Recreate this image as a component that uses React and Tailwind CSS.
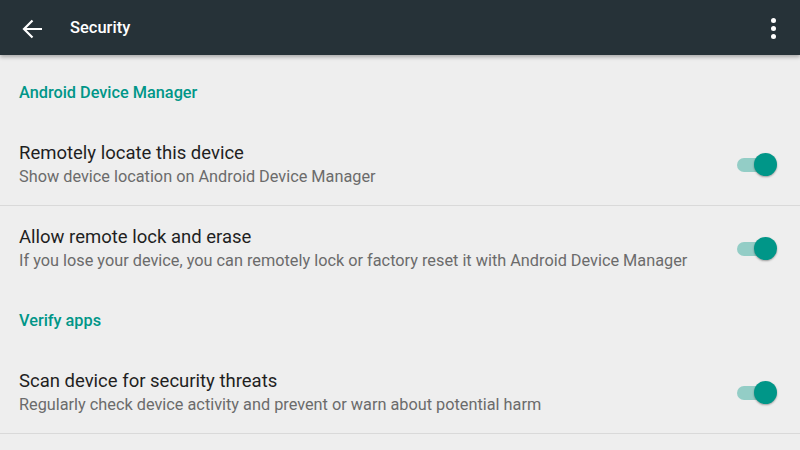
import React from "react";

function Toggle() {
  return (
    <div className="relative w-[40px] h-[24px] mr-[23px] flex items-center">
      <div className="absolute left-0 right-[4px] h-[14px] rounded-full bg-[#93cdc6]" />
      <div className="absolute right-0 w-[23px] h-[23px] rounded-full bg-[#009688] shadow-[0_1px_2px_rgba(0,0,0,0.35)]" />
    </div>
  );
}

function Item({ title, sub, h, border }) {
  return (
    <div className={`flex items-center justify-between pl-[19px] ${h} ${border ? "border-b border-[#d9d9d9]" : ""}`}>
      <div className="flex flex-col">
        <div className="text-[18.5px] leading-[23px] text-[#1f1f1f]">{title}</div>
        <div className="text-[16.3px] leading-[23px] text-[#6b6b6b]">{sub}</div>
      </div>
      <Toggle />
    </div>
  );
}

export default function App() {
  return (
    <div className="w-[800px] h-[450px] bg-[#eeeeee] overflow-hidden" style={{ fontFamily: "Roboto, sans-serif" }}>
      <div className="relative z-10 h-[55px] pt-[2px] bg-[#263238] flex items-center justify-between shadow-[0_2px_4px_rgba(0,0,0,0.3)]">
        <div className="flex items-center">
          <svg className="ml-[22px]" width="21" height="20" viewBox="0 0 21 20" fill="none" stroke="white" strokeWidth="2.2">
            <path d="M20 10H2M10.5 1.5L2 10l8.5 8.5" />
          </svg>
          <div className="ml-[27px] text-white text-[16.5px] font-medium">Security</div>
        </div>
        <div className="mr-[24px] flex flex-col gap-[3px]">
          <div className="w-[5px] h-[5px] rounded-full bg-white" />
          <div className="w-[5px] h-[5px] rounded-full bg-white" />
          <div className="w-[5px] h-[5px] rounded-full bg-white" />
        </div>
      </div>
      <div className="h-[69px] flex items-center pl-[19px] pt-[7px] text-[16.3px] font-medium text-[#009688]">Android Device Manager</div>
      <Item h="h-[82px]" border title="Remotely locate this device" sub="Show device location on Android Device Manager" />
      <Item h="h-[85px]" title="Allow remote lock and erase" sub="If you lose your device, you can remotely lock or factory reset it with Android Device Manager" />
      <div className="h-[61px] flex items-center pl-[19px] pb-[1px] text-[16.3px] font-medium text-[#009688]">Verify apps</div>
      <Item h="h-[82px]" border title="Scan device for security threats" sub="Regularly check device activity and prevent or warn about potential harm" />
    </div>
  );
}
